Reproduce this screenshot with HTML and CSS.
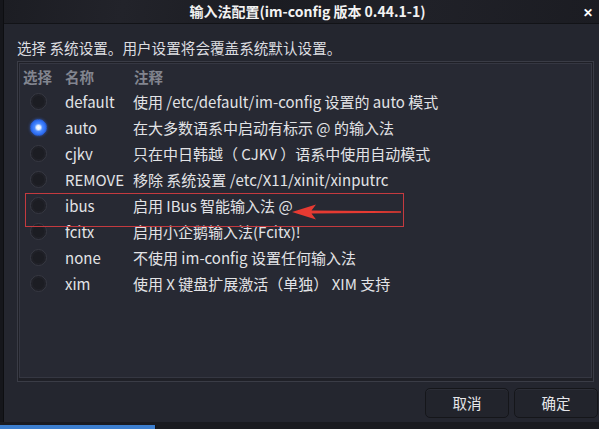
FILE: index.html
```html
<!DOCTYPE html>
<html lang="zh-CN">
<head>
<meta charset="utf-8">
<title>输入法配置</title>
<link rel="stylesheet" href="styles.css">
</head>
<body>
<div class="screen">
  <div class="window">
    <div class="titlebar">
      <div class="title">输入法配置(im-config 版本 0.44.1-1)</div>
      <div class="close">✕</div>
    </div>
    <div class="content">
      <div class="label">选择 系统设置。用户设置将会覆盖系统默认设置。</div>
      <div class="frame">
        <div class="inner">
          <div class="row head">
            <div class="c1">选择</div>
            <div class="c2">名称</div>
            <div class="c3">注释</div>
          </div>
          <div class="row"><div class="c1"><span class="radio"></span></div><div class="c2">default</div><div class="c3">使用 /etc/default/im-config 设置的 auto 模式</div></div>
          <div class="row"><div class="c1"><span class="radio on"></span></div><div class="c2">auto</div><div class="c3">在大多数语系中启动有标示 @ 的输入法</div></div>
          <div class="row"><div class="c1"><span class="radio"></span></div><div class="c2">cjkv</div><div class="c3">只在中日韩越（ CJKV ）语系中使用自动模式</div></div>
          <div class="row"><div class="c1"><span class="radio"></span></div><div class="c2">REMOVE</div><div class="c3">移除 系统设置 /etc/X11/xinit/xinputrc</div></div>
          <div class="row"><div class="c1"><span class="radio"></span></div><div class="c2">ibus</div><div class="c3">启用 IBus 智能输入法 @</div></div>
          <div class="row"><div class="c1"><span class="radio"></span></div><div class="c2">fcitx</div><div class="c3">启用小企鹅输入法(Fcitx)!</div></div>
          <div class="row"><div class="c1"><span class="radio"></span></div><div class="c2">none</div><div class="c3">不使用 im-config 设置任何输入法</div></div>
          <div class="row"><div class="c1"><span class="radio"></span></div><div class="c2">xim</div><div class="c3">使用 X 键盘扩展激活（单独） XIM 支持</div></div>
          <div class="highlight"></div>
          <svg class="arrow" width="116" height="20" viewBox="0 0 116 20">
            <path d="M3 10 L27 2.5 L22.5 8.6 L112 9.3 L112 10.8 L22.5 11.6 L27 17.5 Z" fill="#e63a32"/>
          </svg>
        </div>
      </div>
      <div class="buttons">
        <div class="btn">取消</div>
        <div class="btn">确定</div>
      </div>
    </div>
  </div>
  <div class="taskbar"><div class="task"></div></div>
</div>
</body>
</html>
```

FILE: styles.css
```css
html, body {
  margin: 0;
  padding: 0;
  background: #15161b;
}
body {
  width: 599px;
  height: 429px;
  overflow: hidden;
  font-family: "Noto Sans CJK SC", "Noto Sans", sans-serif;
  color: #dfe0e3;
}
.screen {
  display: flex;
  flex-direction: column;
  height: 429px;
}
.window {
  margin-left: 3px;
  height: 422px;
  background: #24262f;
  border-left: 1px solid #0d0e11;
  display: flex;
  flex-direction: column;
}
.titlebar {
  height: 23px;
  flex: none;
  display: flex;
  align-items: center;
  background: linear-gradient(100deg, #1c1d23 0%, #22232a 20%, #1b1c22 45%, #202128 70%, #1b1c22 100%);
  border-bottom: 1px solid #121317;
}
.title {
  flex: 1;
  text-align: center;
  padding-left: 33px;
  font-size: 14px;
  font-weight: bold;
  color: #f2f2f2;
  line-height: 23px;
}
.close {
  width: 20px;
  margin-right: 1px;
  text-align: center;
  font-size: 12px;
  font-weight: bold;
  color: #ffffff;
  line-height: 23px;
}
.content {
  flex: 1;
  display: flex;
  flex-direction: column;
  padding: 0 4px 0 13px;
}
.label {
  margin-top: 13px;
  font-size: 14.6px;
  line-height: 22px;
  height: 24px;
  color: #dcdde0;
}
.frame {
  height: 317px;
  border: 1px solid #3a3c46;
  background: #1f2027;
  padding: 1px;
  margin-right: 1px;
}
.inner {
  position: relative;
  height: 313px;
  border: 1px solid #353742;
  background: #272933;
}
.row {
  display: grid;
  grid-template-columns: 45px 68px 1fr;
  height: 26px;
  align-items: center;
  font-size: 15px;
  white-space: nowrap;
}
.row.head {
  height: 24px;
  grid-template-columns: 43px 68px 1fr;
  color: #82858f;
  font-weight: bold;
  font-size: 14.5px;
}
.head .c1 { padding-left: 3px; }
.head .c2 { padding-left: 2px; }
.head .c3 { padding-left: 3px; }
.row .c2, .row .c3 {
  color: #e2e3e6;
}
.head .c2, .head .c3 { color: #82858f; }
.c1 {
  display: flex;
  align-items: center;
}
.radio {
  display: block;
  width: 15px;
  height: 15px;
  margin-left: 10px;
  border-radius: 50%;
  background: #1c1d23;
  border: 1px solid #373943;
  box-shadow: inset 0 0 0 2px #202128;
}
.radio.on {
  background: radial-gradient(circle, #ffffff 0, #e6f0ff 2px, #4d8cff 4px, #2c6cf2 7px);
  border-color: #2a5fd6;
  box-shadow: 0 0 3px rgba(60, 120, 255, 0.6);
}
.highlight {
  position: absolute;
  left: 5px;
  top: 129px;
  width: 377px;
  height: 32px;
  border: 1px solid #c43a3f;
}
.arrow {
  position: absolute;
  left: 269px;
  top: 138px;
}
.buttons {
  display: flex;
  justify-content: flex-end;
  gap: 5px;
  margin-top: 6px;
  margin-right: -3px;
}
.btn {
  box-sizing: border-box;
  width: 84px;
  height: 30px;
  border: 1px solid #15161a;
  border-radius: 5px;
  background: #22242c;
  box-shadow: inset 0 1px 0 #2c2e37;
  text-align: center;
  line-height: 28px;
  font-size: 14.5px;
  color: #e6e7ea;
}
.taskbar {
  height: 7px;
  background: #1a1b20;
  display: flex;
  align-items: flex-end;
}
.task {
  width: 155px;
  height: 4px;
  background: #3d7fcf;
  border-right: 1px solid #10131a;
}
```
